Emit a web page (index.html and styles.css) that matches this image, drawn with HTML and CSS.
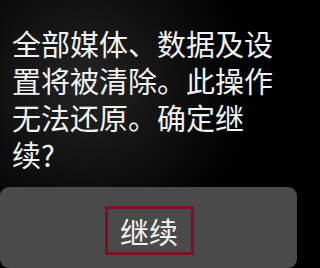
FILE: index.html
```html
<!DOCTYPE html>
<html lang="zh-CN">
<head>
<meta charset="utf-8">
<link rel="stylesheet" href="styles.css">
</head>
<body>
<div class="screen">
  <div class="message">全部媒体、数据及设置将被清除。此操作无法还原。确定继续?</div>
  <div class="panel">
    <div class="btn">继续</div>
  </div>
</div>
</body>
</html>
```
FILE: styles.css
```css
html, body {
  margin: 0;
  padding: 0;
  background: #000;
}
.screen {
  width: 297px;
  height: 268px;
  overflow: hidden;
  display: flex;
  flex-direction: column;
  background: radial-gradient(circle at 85px 85px, #242424 0, #0c0c0c 110px, #000 170px);
  font-family: "Noto Sans CJK SC", "Noto Sans", sans-serif;
}
.message {
  flex: 1;
  box-sizing: border-box;
  padding: 25px 12px 0 12px;
  font-size: 29px;
  line-height: 37px;
  color: #f2f2f2;
}
.panel {
  height: 81px;
  border-radius: 9px;
  background: #4a4a4a;
  display: flex;
  justify-content: center;
  align-items: flex-start;
  padding-top: 19px;
  box-sizing: border-box;
}
.btn {
  box-sizing: border-box;
  width: 89px;
  height: 49px;
  border: 3px solid #7e1020;
  display: flex;
  align-items: center;
  justify-content: center;
  font-size: 29px;
  color: #f2f2f2;
  margin-left: 1px;
}
```
